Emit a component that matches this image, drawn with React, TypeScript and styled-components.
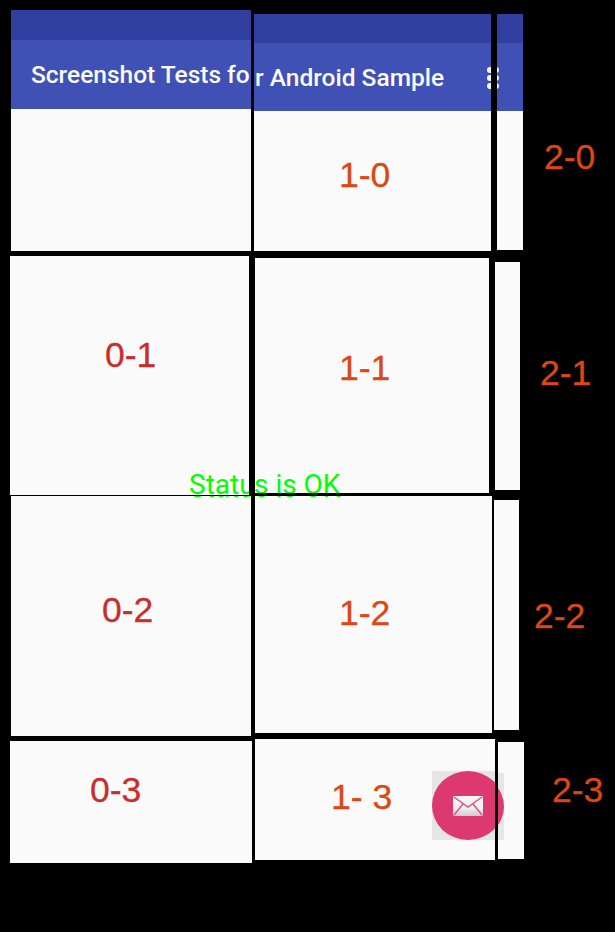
import React from 'react';
import styled, { createGlobalStyle } from 'styled-components';

const GlobalStyle = createGlobalStyle`
  html, body {
    margin: 0;
    padding: 0;
    background: #000;
  }
`;

const Page = styled.main`
  width: 615px;
  height: 932px;
  display: flex;
  overflow: hidden;
  background: #000;
`;

const Column = styled.section<{ $w: number }>`
  flex: 0 0 ${(p) => p.$w}px;
  width: ${(p) => p.$w}px;
  display: flex;
  flex-direction: column;
`;

const Row = styled.div`
  display: flex;
`;

type TileBox = { $dx: number; $dy: number; $w: number; $h: number };

const Tile = styled.div<TileBox>`
  position: relative;
  flex: 0 0 auto;
  display: flex;
  flex-direction: column;
  box-sizing: border-box;
  width: ${(p) => p.$w}px;
  height: ${(p) => p.$h}px;
  margin: ${(p) => p.$dy}px 0 0 ${(p) => p.$dx}px;
  overflow: hidden;
  background: #fafafa;
`;

const StatusBar = styled.div<{ $h: number }>`
  height: ${(p) => p.$h}px;
  background: #303f9f;
`;

const Toolbar = styled.header<{ $h: number; $pad: number; $top: number }>`
  height: ${(p) => p.$h}px;
  box-sizing: border-box;
  display: flex;
  align-items: flex-start;
  padding: ${(p) => p.$top}px 0 0 ${(p) => p.$pad}px;
  background: #4051b5;
`;

const Title = styled.h1`
  margin: 0;
  color: #fafafa;
  font: 500 24.5px/28px Roboto, sans-serif;
  white-space: nowrap;
`;

const Dots = styled.div<{ $x: number }>`
  position: absolute;
  left: ${(p) => p.$x}px;
  top: 53px;
  display: flex;
  flex-direction: column;
  gap: 2px;
`;

const Dot = styled.span`
  width: 6px;
  height: 6px;
  border-radius: 50%;
  background: #fafafa;
`;

const Label = styled.div<{ $x: number; $y: number; $orange?: boolean }>`
  margin: ${(p) => p.$y}px 0 0 ${(p) => p.$x}px;
  color: ${(p) => (p.$orange ? '#dc4713' : '#c92d2b')};
  font: 400 35.5px/36px "Liberation Sans", Arial, sans-serif;
  -webkit-text-stroke: 0.3px currentColor;
  white-space: nowrap;
`;

const Status = styled.div<{ $x: number; $y: number }>`
  position: absolute;
  left: ${(p) => p.$x}px;
  top: ${(p) => p.$y}px;
  color: #00ff00;
  font: 400 28px/28px Roboto, sans-serif;
  white-space: nowrap;
`;

const FabBox = styled.div<{ $x: number; $y: number; $h: number }>`
  position: absolute;
  left: ${(p) => p.$x}px;
  top: ${(p) => p.$y}px;
  width: 72px;
  height: ${(p) => p.$h}px;
  background: #e6e6e6;
`;

const FabCircle = styled.div`
  position: absolute;
  inset: 0;
  display: flex;
  align-items: center;
  justify-content: center;
  padding-right: 1px;
  box-sizing: border-box;
  border-radius: 50%;
  background: #dd3971;
`;

const MailIcon = () => (
  <svg width="30" height="20" viewBox="0 0 30 20">
    <defs>
      <linearGradient id="mailFill" x1="0" y1="0" x2="0" y2="1">
        <stop offset="0" stopColor="#f7f7f7" />
        <stop offset="0.6" stopColor="#efefef" />
        <stop offset="1" stopColor="#cdcdcd" />
      </linearGradient>
    </defs>
    <rect width="30" height="20" rx="1.5" fill="url(#mailFill)" />
    <path
      d="M1 1 L15 11 L29 1 M1 19 L10 8 M29 19 L20 8"
      fill="none"
      stroke="#d9577f"
      strokeWidth="1.5"
    />
  </svg>
);

const Fab = ({ x, y, h }: { x: number; y: number; h: number }) => (
  <FabBox $x={x} $y={y} $h={h}>
    <FabCircle>
      <MailIcon />
    </FabCircle>
  </FabBox>
);

export default function App() {
  return (
    <>
      <GlobalStyle />
      <Page>
        <Column $w={254}>
          <Tile $dx={11} $dy={10} $w={240} $h={241}>
            <StatusBar $h={30} />
            <Toolbar $h={69} $pad={20} $top={21}>
              <Title>Screenshot Tests fo</Title>
            </Toolbar>
          </Tile>
          <Tile $dx={10} $dy={5} $w={239} $h={239}>
            <Label $x={95} $y={81}>0-1</Label>
            <Status $x={179} $y={215}>Status</Status>
          </Tile>
          <Tile $dx={11} $dy={1} $w={240} $h={240}>
            <Label $x={91} $y={96}>0-2</Label>
            <Status $x={178} $y={-22}>Status</Status>
          </Tile>
          <Tile $dx={10} $dy={5} $w={242} $h={122}>
            <Label $x={80} $y={31}>0-3</Label>
          </Tile>
        </Column>

        <Column $w={240}>
          <Tile $dx={0} $dy={14} $w={237} $h={237}>
            <StatusBar $h={29} />
            <Toolbar $h={68} $pad={1} $top={21}>
              <Title>r Android Sample</Title>
            </Toolbar>
            <Dots $x={233}>
              <Dot />
              <Dot />
              <Dot />
            </Dots>
            <Label $orange $x={85} $y={46}>1-0</Label>
          </Tile>
          <Tile $dx={1} $dy={7} $w={234} $h={235}>
            <Label $orange $x={84} $y={92}>1-1</Label>
            <Status $x={-1} $y={213}>s is OK</Status>
          </Tile>
          <Tile $dx={1} $dy={3} $w={237} $h={237}>
            <Label $orange $x={84} $y={99}>1-2</Label>
            <Status $x={-1} $y={-22}>s is OK</Status>
          </Tile>
          <Tile $dx={1} $dy={6} $w={240} $h={121}>
            <Label $orange $x={76} $y={40}>1- 3</Label>
            <Fab x={177} y={32} h={69} />
          </Tile>
        </Column>

        <Column $w={121}>
          <Row>
            <Tile $dx={3} $dy={14} $w={26} $h={236}>
              <StatusBar $h={29} />
              <Toolbar $h={68} $pad={0} $top={22} />
              <Dots $x={-4}>
                <Dot />
                <Dot />
                <Dot />
              </Dots>
            </Tile>
            <Label $orange $x={21} $y={139}>2-0</Label>
          </Row>
          <Row>
            <Tile $dx={1} $dy={12} $w={25} $h={228} />
            <Label $orange $x={20} $y={105}>2-1</Label>
          </Row>
          <Row>
            <Tile $dx={0} $dy={10} $w={25} $h={230} />
            <Label $orange $x={15} $y={108}>2-2</Label>
          </Row>
          <Row>
            <Tile $dx={4} $dy={12} $w={26} $h={117}>
              <Fab x={-66} y={31} h={67} />
            </Tile>
            <Label $orange $x={28} $y={42}>2-3</Label>
          </Row>
        </Column>
      </Page>
    </>
  );
}
